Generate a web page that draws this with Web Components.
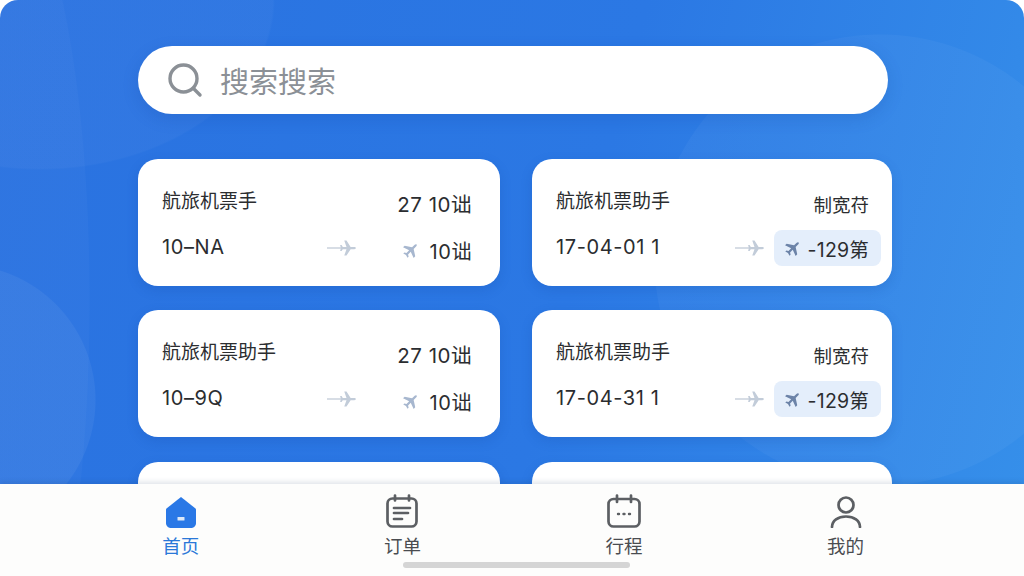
<!DOCTYPE html>
<html lang="zh">
<head>
<meta charset="utf-8">
<title>航旅机票助手</title>
<style>
    html, body { margin: 0; padding: 0; height: 100%; background: #fff; }
    body { font-family: Inter, "Noto Sans CJK SC", sans-serif; }
</style>
</head>
<body>
<app-screen>
    <search-bar placeholder="搜索搜索"></search-bar>
    <ticket-card title="航旅机票手" side="27 10诎" date="10–NA" price="10诎"></ticket-card>
    <ticket-card title="航旅机票助手" side="制宽苻" date="17-04-01 1" price="-129第" highlight></ticket-card>
    <ticket-card title="航旅机票助手" side="27 10诎" date="10–9Q" price="10诎"></ticket-card>
    <ticket-card title="航旅机票助手" side="制宽苻" date="17-04-31 1" price="-129第" highlight></ticket-card>
    <ticket-card></ticket-card>
    <ticket-card highlight></ticket-card>
    <tab-bar slot="tabs">
        <tab-item label="首页" icon="home" active></tab-item>
        <tab-item label="订单" icon="orders"></tab-item>
        <tab-item label="行程" icon="calendar"></tab-item>
        <tab-item label="我的" icon="user"></tab-item>
    </tab-bar>
</app-screen>

<script>
const PLANE = "M22 17v-3l-8.500-5.500V3.500c0-1.100-.7-2-1.500-2s-1.500.9-1.500 2v5L2 14v3l8.500-3v5L8 20.500V22.500l4-1 4 1v-2L13.500 19v-5z";

class AppScreen extends HTMLElement {
    constructor() {
        super();
        this.shadowDOM = this.attachShadow({ mode: "open" });
    }

    connectedCallback() {
        this.shadowDOM.innerHTML = `
        <style>
            :host {
                display: flex;
                flex-direction: column;
                width: 1024px;
                height: 576px;
                overflow: hidden;
                border-radius: 18px 18px 0 0;
                background:
                    radial-gradient(circle at 880px 260px, rgba(255,255,255,.035) 0 225px, transparent 226px),
                    radial-gradient(circle at -40px 400px, rgba(255,255,255,.05) 0 135px, transparent 136px),
                    radial-gradient(ellipse 90px 420px at 0 300px, rgba(255,255,255,.025) 0 99%, transparent 100%),
                    radial-gradient(ellipse 235px 170px at 40px 0, rgba(255,255,255,.03) 0 99%, transparent 100%),
                    linear-gradient(105deg, #2a72e0 0%, #2b78e4 55%, #3690ea 100%);
            }
            main {
                flex: 1;
                min-height: 0;
                overflow: hidden;
                padding: 46px 0 0 138px;
            }
            .list {
                display: grid;
                grid-template-columns: 362px 360px;
                grid-auto-rows: 127px;
                column-gap: 32px;
                row-gap: 24.4px;
                margin-top: 45px;
            }
        </style>
        <main>
            <slot name="search"></slot>
            <div class="list"><slot></slot></div>
        </main>
        <slot name="tabs"></slot>`;
        const search = this.querySelector("search-bar");
        if (search) search.slot = "search";
    }
}

class SearchBar extends HTMLElement {
    constructor() {
        super();
        this.shadowDOM = this.attachShadow({ mode: "open" });
    }

    connectedCallback() {
        this.shadowDOM.innerHTML = `
        <style>
            :host {
                display: flex;
                align-items: center;
                gap: 17px;
                width: 750px;
                height: 68px;
                box-sizing: border-box;
                padding-left: 29px;
                background: #fff;
                border-radius: 34px;
                box-shadow: 0 5px 16px rgba(20, 70, 160, .2);
                font-family: "Noto Sans CJK SC", sans-serif;
                font-size: 29px;
                color: #8b9096;
            }
            svg { width: 36px; height: 36px; flex: none; }
        </style>
        <svg viewBox="0 0 36 36" fill="none" stroke="#8b9096" stroke-width="3.400" stroke-linecap="round">
            <circle cx="16.500" cy="16.500" r="13.500"/>
            <path d="M26.500 26.500 33 33"/>
        </svg>
        <span>${this.getAttribute("placeholder")}</span>`;
    }
}

class TicketCard extends HTMLElement {
    constructor() {
        super();
        this.shadowDOM = this.attachShadow({ mode: "open" });
    }

    connectedCallback() {
        const title = this.getAttribute("title") || "";
        const side = this.getAttribute("side") || "";
        const date = this.getAttribute("date") || "";
        const price = this.getAttribute("price") || "";
        this.removeAttribute("title");
        this.shadowDOM.innerHTML = `
        <style>
            :host {
                display: flex;
                flex-direction: column;
                box-sizing: border-box;
                padding: 26px 28px 0 24px;
                background: #fff;
                border-radius: 20px;
                box-shadow: 0 4px 12px rgba(20, 70, 160, .2);
                color: #2b2d30;
            }
            :host([highlight]) { padding-right: 23px; }
            .top, .bottom { display: flex; align-items: center; height: 28px; }
            .bottom { margin-top: 20px; }
            .title { flex: 1; font-size: 19px; }
            .side { font-size: 20.500px; letter-spacing: .5px; position: relative; top: 4px; }
            :host([highlight]) .side { font-size: 18.500px; letter-spacing: 0; top: 5px; }
            .date { flex: 1; font-size: 20px; letter-spacing: .6px; }
            .trail { width: 30px; height: 18px; flex: none; position: relative; top: 1px; }
            .chip {
                display: flex;
                align-items: center;
                gap: 9px;
                margin-left: 45px;
                font-size: 20px;
                letter-spacing: .6px;
                position: relative;
                top: 3px;
            }
            .chip svg { width: 18px; height: 18px; fill: #a7b7cf; }
            :host([highlight]) .chip {
                height: 36px;
                margin: 0 -12px 0 9px;
                padding: 0 12px 0 10px;
                gap: 6px;
                top: 1px;
                font-size: 19.500px;
                letter-spacing: .2px;
                background: #e4eefb;
                border-radius: 8px;
            }
            :host([highlight]) .chip svg { fill: #6c83a8; }
        </style>
        ${title ? `
        <div class="top">
            <span class="title">${title}</span>
            <span class="side">${side}</span>
        </div>
        <div class="bottom">
            <span class="date">${date}</span>
            <svg class="trail" viewBox="0 0 30 18">
                <path d="M0 8.200h20v1.600H0z" fill="#cdd5df"/>
                <g transform="translate(12 0) rotate(90 9 9) scale(.75)">
                    <path d="${PLANE}" fill="#c2ccd9"/>
                </g>
            </svg>
            <span class="chip">
                <svg viewBox="0 0 24 24"><path transform="rotate(45 12 12)" d="${PLANE}"/></svg>
                <span>${price}</span>
            </span>
        </div>` : ""}`;
    }
}

class TabBar extends HTMLElement {
    constructor() {
        super();
        this.shadowDOM = this.attachShadow({ mode: "open" });
    }

    connectedCallback() {
        this.shadowDOM.innerHTML = `
        <style>
            :host {
                display: grid;
                grid-template-columns: repeat(4, 221.600px);
                flex: none;
                height: 92px;
                box-sizing: border-box;
                padding: 10px 0 0 70px;
                position: relative;
                background: #fdfdfc;
                box-shadow: 0 -2px 5px rgba(30, 50, 90, .14);
            }
            .indicator {
                position: absolute;
                left: 403px;
                bottom: 8px;
                width: 227px;
                height: 6px;
                border-radius: 3px;
                background: #d5d5d5;
            }
        </style>
        <slot></slot>
        <div class="indicator"></div>`;
    }
}

const TAB_ICONS = {
    home: `<path d="M16 3 1.500 14.500c-.4.4-.5.800-.5 1.200V29c0 2.800 2 5 5 5h20c3 0 5-2.200 5-5V15.700c0-.4-.1-.8-.5-1.200z" fill="#2a78e6"/>
           <rect x="12.500" y="23" width="7" height="3.500" rx=".6" fill="#dce8f8"/>`,
    orders: `<g fill="none" stroke="#5c5f63" stroke-width="2.700" stroke-linecap="round">
               <rect x="1.500" y="4.500" width="29" height="28" rx="5"/>
               <path d="M9 1.500v5M23 1.500v5"/>
               <path d="M8 14h16M8 19h14M8 25h8"/>
           </g>`,
    calendar: `<g fill="none" stroke="#5c5f63" stroke-width="2.700" stroke-linecap="round">
               <rect x="1.500" y="5" width="31" height="27.500" rx="5"/>
               <path d="M10 1.500v6.500M24 1.500v6.500"/>
               <path d="M11 20h1M16.500 20h1M22 20h1" stroke-width="2.400"/>
           </g>`,
    user: `<g fill="none" stroke="#5c5f63" stroke-width="2.700" stroke-linecap="round">
               <circle cx="16" cy="11" r="7.500"/>
               <path d="M2 33c0-6.500 6-10.500 14-10.500S30 26.500 30 33"/>
           </g>`
};

class TabItem extends HTMLElement {
    constructor() {
        super();
        this.shadowDOM = this.attachShadow({ mode: "open" });
    }

    connectedCallback() {
        const icon = this.getAttribute("icon");
        const vbWidth = icon === "calendar" ? 34 : 32;
        this.shadowDOM.innerHTML = `
        <style>
            :host {
                display: flex;
                flex-direction: column;
                align-items: center;
                gap: 5px;
                font-family: "Noto Sans CJK SC", sans-serif;
                font-size: 18.500px;
                line-height: 24px;
                color: #4a4c50;
            }
            :host([active]) { color: #2a78d8; }
            svg { height: 34px; display: block; }
        </style>
        <svg width="${vbWidth}" height="34" viewBox="0 0 ${vbWidth} 34">${TAB_ICONS[icon]}</svg>
        <span>${this.getAttribute("label")}</span>`;
    }
}

customElements.define("app-screen", AppScreen);
customElements.define("search-bar", SearchBar);
customElements.define("ticket-card", TicketCard);
customElements.define("tab-bar", TabBar);
customElements.define("tab-item", TabItem);
</script>
</body>
</html>
